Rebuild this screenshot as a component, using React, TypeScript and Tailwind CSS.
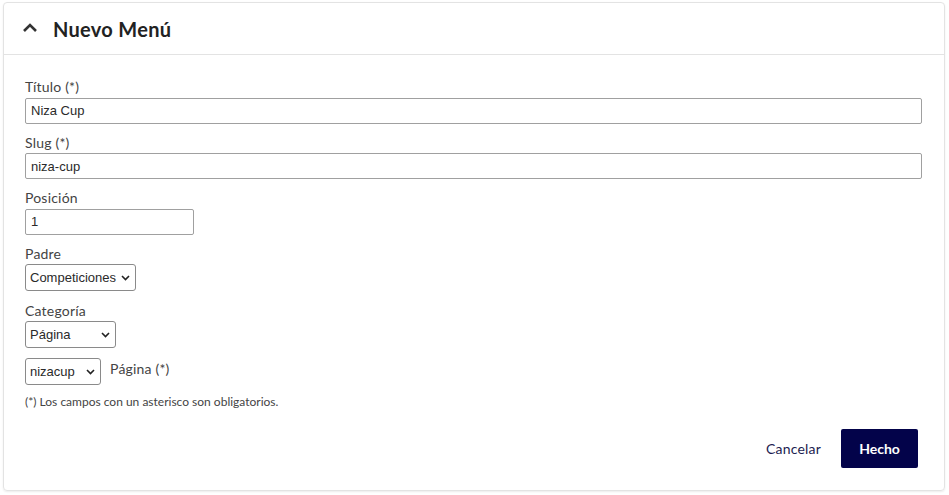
import { useState } from "react";

const label = "block text-[14px] leading-4 text-[#444] mb-[2px] tracking-[0.2px]";
const input =
  "h-[26px] border border-[#a0a0a0] rounded-[2px] px-[5px] text-[13px] text-[#2a2a2a] outline-none bg-white";
const selectCls =
  "h-[27px] appearance-none border border-[#8a8a8a] rounded-[3px] pl-[4px] pr-[18px] text-[13px] text-[#2a2a2a] bg-white outline-none";
const arial = { fontFamily: "'Liberation Sans', Arial, sans-serif" };

function Chevron() {
  return (
    <svg width="9" height="6" viewBox="0 0 9 6" className="absolute right-[6px] top-[11px] pointer-events-none">
      <path d="M1 1l3.5 3.5L8 1" fill="none" stroke="#222" strokeWidth="1.6" />
    </svg>
  );
}

function Select({ value, options, width }: { value: string; options: string[]; width: string }) {
  const [v, setV] = useState(value);
  return (
    <div className={`relative ${width}`}>
      <select value={v} onChange={(e) => setV(e.target.value)} className={`${selectCls} w-full`} style={arial}>
        {options.map((o) => (
          <option key={o}>{o}</option>
        ))}
      </select>
      <Chevron />
    </div>
  );
}

export default function App() {
  return (
    <div className="w-[949px] h-[495px] bg-white pt-[2px] pl-[3px] pr-[4px] font-['Lato',sans-serif]">
      <div className="h-[489px] border border-[#e3e3e3] rounded-[4px] shadow-[0_1px_2px_rgba(0,0,0,0.08)] flex flex-col">
        <div className="h-[52px] flex items-center border-b border-[#e3e3e3] pl-[18px] shrink-0">
          <svg width="16" height="11" viewBox="0 0 16 11" className="mb-[2px]">
            <path d="M2 9L8 3l6 6" fill="none" stroke="#333" strokeWidth="2.6" />
          </svg>
          <h1 className="ml-[15px] text-[20px] font-bold text-[#222] tracking-[0.3px]">Nuevo Menú</h1>
        </div>

        <div className="flex-1 flex flex-col pl-[21px] pr-[22px] pt-[24px]">
          <div className="mb-[11px]">
            <label className={label}>Título (*)</label>
            <input defaultValue="Niza Cup" className={`${input} w-full`} style={arial} />
          </div>
          <div className="mb-[11px]">
            <label className={label}>Slug (*)</label>
            <input defaultValue="niza-cup" className={`${input} w-full`} style={arial} />
          </div>
          <div className="mb-[11px]">
            <label className={label}>Posición</label>
            <input defaultValue="1" className={`${input} w-[169px]`} style={arial} />
          </div>
          <div className="mb-[12px]">
            <label className={label}>Padre</label>
            <Select value="Competiciones" options={["Competiciones"]} width="w-[111px]" />
          </div>
          <div className="mb-[10px]">
            <label className={label}>Categoría</label>
            <Select value="Página" options={["Página"]} width="w-[91px]" />
          </div>
          <div className="flex items-start gap-[9px]">
            <Select value="nizacup" options={["nizacup"]} width="w-[76px]" />
            <span className="text-[14px] leading-4 text-[#444] mt-[3px] tracking-[0.2px]">Página (*)</span>
          </div>
          <p className="mt-[10px] text-[12px] leading-[14px] text-[#444]">(*) Los campos con un asterisco son obligatorios.</p>

          <div className="flex items-center justify-end gap-[20px] mt-[20px] pr-[4px]">
            <button className="text-[14px] text-[#1c1c50] tracking-[0.2px]">Cancelar</button>
            <button className="h-[39px] w-[77px] bg-[#03034a] rounded-[2px] text-white text-[14px] font-bold">Hecho</button>
          </div>
        </div>
      </div>
    </div>
  );
}
